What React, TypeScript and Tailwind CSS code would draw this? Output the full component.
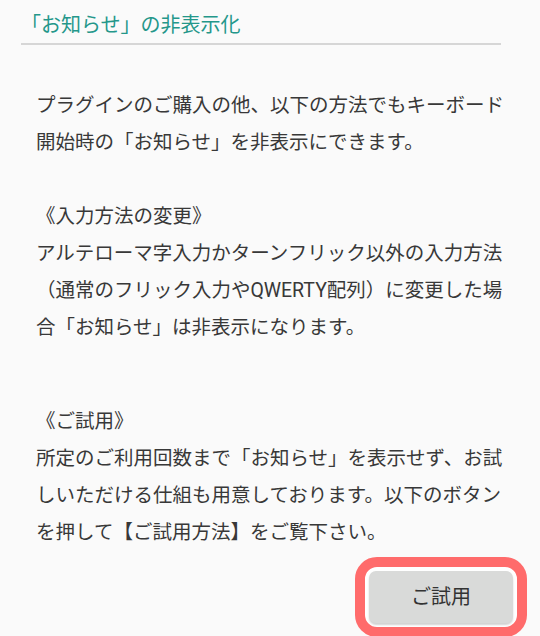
import React from 'react';

const intro = [
  'プラグインのご購入の他、以下の方法でもキーボード',
  '開始時の「お知らせ」を非表示にできます。',
];

const change = [
  '《入力方法の変更》',
  'アルテローマ字入力かターンフリック以外の入力方法',
  '（通常のフリック入力やQWERTY配列）に変更した場',
  '合「お知らせ」は非表示になります。',
];

const trial = [
  '《ご試用》',
  '所定のご利用回数まで「お知らせ」を表示せず、お試',
  'しいただける仕組も用意しております。以下のボタン',
  'を押して【ご試用方法】をご覧下さい。',
];

function Lines({ lines }: { lines: string[] }) {
  return (
    <div>
      {lines.map((l) => (
        <div key={l} className="whitespace-nowrap">
          {l}
        </div>
      ))}
    </div>
  );
}

export default function App() {
  return (
    <div className="min-h-[636px] h-[636px] overflow-hidden bg-[#fafafa] font-['Roboto','Noto_Sans_CJK_JP',sans-serif]">
      <div className="pl-[21px] pt-[11px]">
        <h2 className="w-[480px] border-b-2 border-[#d6d6d6] pb-[4px] text-[20px] leading-[28px] text-[#24978a]">
          「お知らせ」の非表示化
        </h2>
      </div>

      <div className="pl-[36px] pt-[42px] text-[19.5px] leading-[37px] text-[#383838]">
        <Lines lines={intro} />
        <div className="mt-[37px]">
          <Lines lines={change} />
        </div>
        <div className="mt-[57px]">
          <Lines lines={trial} />
        </div>
      </div>

      <div className="flex justify-end pr-[13px] pt-[6px]">
        <div className="rounded-[22px] border-[10px] border-[#ff6b6b] bg-white p-[4px]">
          <button className="flex h-[52px] w-[144px] items-center justify-center rounded-[7px] bg-[#d9dad9] text-[20px] text-[#333333] shadow-[0_2px_2px_rgba(0,0,0,0.18)]">
            ご試用
          </button>
        </div>
      </div>
    </div>
  );
}
